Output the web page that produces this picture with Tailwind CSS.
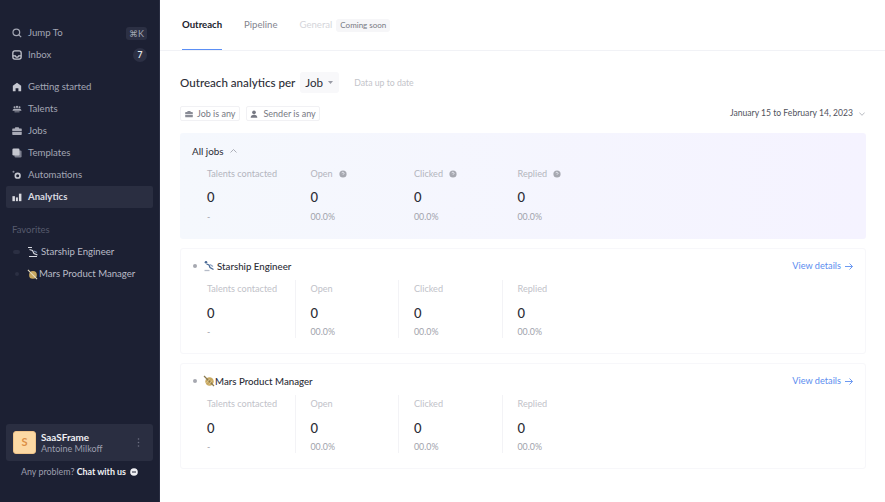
<!DOCTYPE html>
<html lang="en">
<head>
    <meta charset="UTF-8">
    <meta name="viewport" content="width=device-width, initial-scale=1.0">
    <title>Outreach analytics</title>
    <script src="https://cdn.jsdelivr.net/npm/@tailwindcss/browser@4"></script>
</head>
<body class="bg-white h-[502px] w-[885px] overflow-hidden flex font-['Lato','Liberation_Sans',sans-serif]">
    <!-- Sidebar -->
    <aside class="w-[160px] h-full shrink-0 bg-[#1c2033] flex flex-col text-[9.6px] text-[#a3a6b3] border-r border-[#2a2e42]">
        <div class="pt-[22px] px-[6px]">
            <div class="h-[22px] px-[6px] flex items-center gap-[6px]">
                <svg class="w-[10px] h-[10px]" viewBox="0 0 12 12" fill="none" stroke="#a3a6b3" stroke-width="1.5"><circle cx="5.2" cy="5.2" r="4"/><path d="M8.2 8.2L11 11"/></svg>
                <span class="flex-1">Jump To</span>
                <span class="bg-[#2c3044] rounded-[3px] w-[21px] text-center h-[13px] leading-[13px] text-[9px]">⌘K</span>
            </div>
            <div class="h-[22px] px-[6px] flex items-center gap-[6px]">
                <svg class="w-[10px] h-[10px]" viewBox="0 0 12 12" fill="none" stroke="#c5c7d0" stroke-width="1.5"><rect x="1" y="1" width="10" height="10" rx="2.5"/><path d="M1 7h3l1 1.5h2L8 7h3" /></svg>
                <span class="flex-1">Inbox</span>
                <span class="bg-[#2c3044] rounded-full w-[14px] h-[14px] leading-[14px] text-center text-[8.5px] font-bold text-[#e4e5ea]">7</span>
            </div>
        </div>
        <nav class="mt-[10px] px-[6px] flex flex-col">
            <div class="h-[22px] px-[6px] flex items-center gap-[6px]">
                <svg class="w-[10px] h-[10px]" viewBox="0 0 12 12" fill="#c5c7d0"><path d="M6 .8L1 4.6V11h3.3V7.6h3.4V11H11V4.6z"/></svg>
                <span>Getting started</span>
            </div>
            <div class="h-[22px] px-[6px] flex items-center gap-[6px]">
                <svg class="w-[10px] h-[10px]" viewBox="0 0 12 12" fill="#a9abb7"><circle cx="3" cy="4" r="1.2"/><circle cx="6" cy="3.400" r="1.400"/><circle cx="9" cy="4" r="1.200"/><path d="M.6 8c.4-1.600 1.400-2.200 2.400-2.200h6c1 0 2 .6 2.400 2.200zM3 9h6v.8H3z"/></svg>
                <span>Talents</span>
            </div>
            <div class="h-[22px] px-[6px] flex items-center gap-[6px]">
                <svg class="w-[10px] h-[10px]" viewBox="0 0 12 12" fill="#a9abb7"><path d="M4 1.500h4l.7 1.500H11a.7.7 0 0 1 .7.7V6H.3V3.700A.7.7 0 0 1 1 3h2.300zM.3 7h11.400v3a.8.8 0 0 1-.8.8H1.100a.8.8 0 0 1-.8-.8z"/></svg>
                <span>Jobs</span>
            </div>
            <div class="h-[22px] px-[6px] flex items-center gap-[6px]">
                <svg class="w-[10px] h-[10px]" viewBox="0 0 12 12"><rect x="3" y="3" width="8.500" height="8.500" rx="1.500" fill="#7d8090"/><rect x=".5" y=".5" width="8.500" height="8.500" rx="1.500" fill="#c5c7d0"/></svg>
                <span>Templates</span>
            </div>
            <div class="h-[22px] px-[6px] flex items-center gap-[6px]">
                <svg class="w-[10px] h-[10px]" viewBox="0 0 12 12" fill="none"><circle cx="6.800" cy="6.800" r="2.800" stroke="#c5c7d0" stroke-width="2"/><circle cx="1.800" cy="2" r="1.200" fill="#8a8d9c"/></svg>
                <span>Automations</span>
            </div>
            <div class="h-[22px] px-[6px] flex items-center gap-[6px] bg-[#2a2e41] rounded-[2px] text-[#d9dae0] font-bold">
                <svg class="w-[10px] h-[10px]" viewBox="0 0 12 12" fill="#d9dae0"><rect x=".5" y="5" width="3" height="6"/><rect x="4.700" y="6.500" width="2.400" height="4.500"/><rect x="8.300" y="2" width="3" height="9"/></svg>
                <span>Analytics</span>
            </div>
        </nav>
        <div class="mt-[15px] px-[12px] text-[9.5px] text-[#565a6c] h-[14px] leading-[14px]">Favorites</div>
        <div class="mt-[4px] px-[6px] text-[#b9bbc6]">
            <div class="h-[22px] pl-[7px] flex items-center">
                <span class="w-[7px] h-[4px] rounded-full bg-[#2b2f43]"></span>
                <svg class="w-[12px] h-[12px] ml-[7px] mr-[2px]" viewBox="0 0 12 12" fill="none" stroke="#d6d8e0" stroke-width="1.200"><path d="M1 1.500h4M2.500 3.500l3 1 1.500 3 3.500 1.500M2 10.500h8"/><path d="M7 5l3 1.500" stroke="#7c8fb0"/></svg>
                <span>Starship Engineer</span>
            </div>
            <div class="h-[22px] pl-[9px] flex items-center">
                <span class="w-[4px] h-[4px] rounded-full bg-[#2b2f43]"></span>
                <svg class="w-[11px] h-[11px] ml-[8px] mr-[1px]" viewBox="0 0 12 12"><circle cx="6.500" cy="6.500" r="4.200" fill="#c8a860"/><path d="M1 1l10 10" stroke="#e6dcc0" stroke-width="1.200"/></svg>
                <span>Mars Product Manager</span>
            </div>
        </div>
        <div class="mt-auto mx-[6px] h-[37px] pl-[7px] pr-[13px] bg-[#2a2e41] rounded-[3px] flex items-center">
            <div class="w-[23px] h-[23px] rounded-[3px] bg-[#fcd9a4] border border-[#f0c48a] text-[#dc8f45] text-[11px] font-bold flex items-center justify-center">S</div>
            <div class="ml-[5px] flex-1 leading-[12px]">
                <div class="text-[9.9px] font-bold text-[#f0f0f4]">SaaSFrame</div>
                <div class="text-[9px] text-[#9c9fae]">Antoine Milkoff</div>
            </div>
            <svg class="w-[3px] h-[9px]" viewBox="0 0 3 9" fill="#6d7083"><circle cx="1.500" cy="1" r=".8"/><circle cx="1.500" cy="4.500" r=".8"/><circle cx="1.500" cy="8" r=".8"/></svg>
        </div>
        <div class="h-[22px] mb-[19px] flex items-center justify-center gap-[4px] text-[8.9px]">
            <span class="text-[#9c9fae]">Any problem? <b class="text-[#f0f0f4]">Chat with us</b></span>
            <svg class="w-[8px] h-[8px]" viewBox="0 0 8 8"><circle cx="4" cy="4" r="3.800" fill="#f0f0f4"/><rect x="2" y="3.500" width="4" height="1" fill="#1c2033"/></svg>
        </div>
    </aside>

    <!-- Main -->
    <main class="flex-1 min-w-0">
        <div class="h-[51px] border-b border-[#f1f2f6] pl-[22px] flex text-[9.6px]">
            <div class="w-[40px] h-[50px] flex flex-col text-[#20222c] font-bold whitespace-nowrap">
                <span class="h-[49px] leading-[50px]">Outreach</span>
                <span class="h-px bg-[#5b8ff5]"></span>
            </div>
            <div class="ml-[22px] leading-[50px] text-[#83858f]">Pipeline</div>
            <div class="ml-[22px] leading-[50px] text-[#d4d5da]">General</div>
            <div class="ml-[4px] mt-[19px] h-[13px] px-[4px] rounded-[3px] bg-[#f6f6f8] text-[8px] leading-[13px] text-[#777983]">Coming soon</div>
        </div>
        <div class="pl-[20px] pr-[19px]">
            <div class="mt-[21px] h-[21px] flex items-center">
                <span class="text-[11.6px] text-[#2b2d36] font-medium">Outreach analytics per</span>
                <span class="ml-[5px] w-[39px] h-[21px] bg-[#f8f8fa] rounded-[3px] pl-[5px] flex items-center gap-[5px] text-[11.6px] text-[#2b2d36]">Job
                    <svg class="w-[5px] h-[3px]" viewBox="0 0 5 3" fill="#9a9ca6"><path d="M0 0h5L2.500 3z"/></svg>
                </span>
                <span class="ml-[15px] text-[8.7px] text-[#c3c4ca]">Data up to date</span>
            </div>
            <div class="mt-[13px] h-[15px] flex items-center text-[9px] text-[#777983]">
                <span class="h-[15px] px-[4px] border border-[#f1f1f4] rounded-[2px] flex items-center gap-[4px]">
                    <svg class="w-[8px] h-[8px]" viewBox="0 0 12 12" fill="#8a8c96"><path d="M4 1.500h4l.7 1.500H11a.7.7 0 0 1 .7.7V6H.3V3.700A.7.7 0 0 1 1 3h2.300zM.3 7h11.400v3a.8.8 0 0 1-.8.8H1.100a.8.8 0 0 1-.8-.8z"/></svg>
                    Job is any
                </span>
                <span class="ml-[6px] h-[15px] px-[3px] border border-[#f1f1f4] rounded-[2px] flex items-center gap-[5px]">
                    <svg class="w-[8px] h-[8px]" viewBox="0 0 12 12" fill="#777983"><circle cx="6" cy="3.500" r="2.800"/><path d="M1 11.500c0-3 2-4.500 5-4.500s5 1.500 5 4.500z"/></svg>
                    Sender is any
                </span>
                <span class="ml-auto text-[8.6px] text-[#50525c]">January 15 to February 14, 2023</span>
                <svg class="ml-[6px] mr-[1px] w-[6px] h-[4px]" viewBox="0 0 6 4" fill="none" stroke="#a7a9b1" stroke-width=".8"><path d="M.3.5L3 3.300 5.700.5"/></svg>
            </div>

            <!-- All jobs -->
            <section class="mt-[12px] h-[106px] rounded-[3px] bg-gradient-to-r from-[#f5f8fd] to-[#f5f3ff] pl-[12px] pt-[11px]">
                <div class="h-[14px] flex items-center gap-[6px] text-[9.9px] text-[#2b2d36]">All jobs
                    <svg class="w-[7px] h-[4px]" viewBox="0 0 7 4" fill="none" stroke="#9a9ca6" stroke-width=".8"><path d="M.5 3.500L3.500.5l3 3"/></svg>
                </div>
                <div class="mt-[9px] pl-[15px] grid grid-cols-[103.500px_103.500px_103.500px_103.500px]">
                    <div>
                        <div class="text-[9.1px] h-[14px] leading-[14px] text-[#b3b5bd]">Talents contacted</div>
                        <div class="mt-[7px] text-[13px] h-[18px] leading-[18px] text-[#2b2d36] font-medium">0</div>
                        <div class="mt-[4px] text-[8.8px] h-[14px] leading-[14px] text-[#a0a2ab]">-</div>
                    </div>
                    <div>
                        <div class="text-[9.1px] h-[14px] flex items-center gap-[6px] text-[#b3b5bd]">Open
                            <svg class="w-[8px] h-[8px]" viewBox="0 0 8 8"><circle cx="4" cy="4" r="3.600" fill="#a6a8b0"/><path d="M3 3.200a1 1 0 1 1 1.500.9L4 4.500V5" fill="none" stroke="#f5f6fd" stroke-width=".7"/></svg>
                        </div>
                        <div class="mt-[7px] text-[13px] h-[18px] leading-[18px] text-[#2b2d36] font-medium">0</div>
                        <div class="mt-[4px] text-[8.8px] h-[14px] leading-[14px] text-[#a0a2ab]">00.0%</div>
                    </div>
                    <div>
                        <div class="text-[9.1px] h-[14px] flex items-center gap-[6px] text-[#b3b5bd]">Clicked
                            <svg class="w-[8px] h-[8px]" viewBox="0 0 8 8"><circle cx="4" cy="4" r="3.600" fill="#a6a8b0"/><path d="M3 3.200a1 1 0 1 1 1.500.9L4 4.500V5" fill="none" stroke="#f5f6fd" stroke-width=".7"/></svg>
                        </div>
                        <div class="mt-[7px] text-[13px] h-[18px] leading-[18px] text-[#2b2d36] font-medium">0</div>
                        <div class="mt-[4px] text-[8.8px] h-[14px] leading-[14px] text-[#a0a2ab]">00.0%</div>
                    </div>
                    <div>
                        <div class="text-[9.1px] h-[14px] flex items-center gap-[6px] text-[#b3b5bd]">Replied
                            <svg class="w-[8px] h-[8px]" viewBox="0 0 8 8"><circle cx="4" cy="4" r="3.600" fill="#a6a8b0"/><path d="M3 3.200a1 1 0 1 1 1.500.9L4 4.500V5" fill="none" stroke="#f5f6fd" stroke-width=".7"/></svg>
                        </div>
                        <div class="mt-[7px] text-[13px] h-[18px] leading-[18px] text-[#2b2d36] font-medium">0</div>
                        <div class="mt-[4px] text-[8.8px] h-[14px] leading-[14px] text-[#a0a2ab]">00.0%</div>
                    </div>
                </div>
            </section>

            <!-- Starship Engineer -->
            <section class="mt-[9px] h-[106px] rounded-[3px] border border-[#f7f7fa] pl-[12px] pr-[12px] pt-[10px]">
                <div class="h-[14px] flex items-center text-[9.7px] font-medium text-[#2b2d36]">
                    <span class="w-[4px] h-[4px] rounded-full bg-[#a6a8b0] mr-[6px]"></span>
                    <svg class="w-[12px] h-[12px] mr-[2px]" viewBox="0 0 12 12" fill="none" stroke-width="1.300"><circle cx="3" cy="2.200" r="1.300" fill="#4a6a96"/><path d="M3.500 4l2.500 1 1 2.500 3.500 2" stroke="#4a6a96"/><path d="M7 4.500l3 2" stroke="#8fa4c4"/><path d="M1.500 10.500h5" stroke="#b6bcc8"/></svg>
                    Starship Engineer
                    <span class="ml-auto text-[9.2px] font-normal text-[#5b8def]">View details</span>
                    <svg class="ml-[4px] w-[8px] h-[7px]" viewBox="0 0 8 7" fill="none" stroke="#5b8def" stroke-width=".9"><path d="M0 3.500h7.300M4.500.5l3 3-3 3"/></svg>
                </div>
                <div class="mt-[9px] pl-[14px] grid grid-cols-[103.500px_103.500px_103.500px_103.500px]">
                    <div>
                        <div class="text-[9.1px] h-[14px] leading-[14px] text-[#c1c2c9]">Talents contacted</div>
                        <div class="mt-[8px] text-[13px] h-[18px] leading-[18px] text-[#2b2d36] font-medium">0</div>
                        <div class="mt-[3px] text-[8.8px] h-[14px] leading-[14px] text-[#a0a2ab]">-</div>
                    </div>
                    <div class="relative">
                        <span class="absolute -left-[16px] top-[-2px] w-px h-[58px] bg-[#f3f3f6]"></span>
                        <div class="text-[9.1px] h-[14px] leading-[14px] text-[#c1c2c9]">Open</div>
                        <div class="mt-[8px] text-[13px] h-[18px] leading-[18px] text-[#2b2d36] font-medium">0</div>
                        <div class="mt-[3px] text-[8.8px] h-[14px] leading-[14px] text-[#a0a2ab]">00.0%</div>
                    </div>
                    <div class="relative">
                        <span class="absolute -left-[16px] top-[-2px] w-px h-[58px] bg-[#f3f3f6]"></span>
                        <div class="text-[9.1px] h-[14px] leading-[14px] text-[#c1c2c9]">Clicked</div>
                        <div class="mt-[8px] text-[13px] h-[18px] leading-[18px] text-[#2b2d36] font-medium">0</div>
                        <div class="mt-[3px] text-[8.8px] h-[14px] leading-[14px] text-[#a0a2ab]">00.0%</div>
                    </div>
                    <div class="relative">
                        <span class="absolute -left-[16px] top-[-2px] w-px h-[58px] bg-[#f3f3f6]"></span>
                        <div class="text-[9.1px] h-[14px] leading-[14px] text-[#c1c2c9]">Replied</div>
                        <div class="mt-[8px] text-[13px] h-[18px] leading-[18px] text-[#2b2d36] font-medium">0</div>
                        <div class="mt-[3px] text-[8.8px] h-[14px] leading-[14px] text-[#a0a2ab]">00.0%</div>
                    </div>
                </div>
            </section>

            <!-- Mars Product Manager -->
            <section class="mt-[9px] h-[106px] rounded-[3px] border border-[#f7f7fa] pl-[12px] pr-[12px] pt-[10px]">
                <div class="h-[14px] flex items-center text-[9.7px] font-medium text-[#2b2d36]">
                    <span class="w-[4px] h-[4px] rounded-full bg-[#a6a8b0] mr-[6px]"></span>
                    <svg class="w-[12px] h-[12px]" viewBox="0 0 12 12"><circle cx="6.500" cy="6.500" r="4.200" fill="#c8a860"/><path d="M1 1l10 10" stroke="#8a7a50" stroke-width="1.200"/><path d="M3.500 8l3-4M6 9.500l3-4" stroke="#e4d5a8" stroke-width=".7"/></svg>
                    Mars Product Manager
                    <span class="ml-auto text-[9.2px] font-normal text-[#5b8def]">View details</span>
                    <svg class="ml-[4px] w-[8px] h-[7px]" viewBox="0 0 8 7" fill="none" stroke="#5b8def" stroke-width=".9"><path d="M0 3.500h7.300M4.500.5l3 3-3 3"/></svg>
                </div>
                <div class="mt-[9px] pl-[14px] grid grid-cols-[103.500px_103.500px_103.500px_103.500px]">
                    <div>
                        <div class="text-[9.1px] h-[14px] leading-[14px] text-[#c1c2c9]">Talents contacted</div>
                        <div class="mt-[8px] text-[13px] h-[18px] leading-[18px] text-[#2b2d36] font-medium">0</div>
                        <div class="mt-[3px] text-[8.8px] h-[14px] leading-[14px] text-[#a0a2ab]">-</div>
                    </div>
                    <div class="relative">
                        <span class="absolute -left-[16px] top-[-2px] w-px h-[58px] bg-[#f3f3f6]"></span>
                        <div class="text-[9.1px] h-[14px] leading-[14px] text-[#c1c2c9]">Open</div>
                        <div class="mt-[8px] text-[13px] h-[18px] leading-[18px] text-[#2b2d36] font-medium">0</div>
                        <div class="mt-[3px] text-[8.8px] h-[14px] leading-[14px] text-[#a0a2ab]">00.0%</div>
                    </div>
                    <div class="relative">
                        <span class="absolute -left-[16px] top-[-2px] w-px h-[58px] bg-[#f3f3f6]"></span>
                        <div class="text-[9.1px] h-[14px] leading-[14px] text-[#c1c2c9]">Clicked</div>
                        <div class="mt-[8px] text-[13px] h-[18px] leading-[18px] text-[#2b2d36] font-medium">0</div>
                        <div class="mt-[3px] text-[8.8px] h-[14px] leading-[14px] text-[#a0a2ab]">00.0%</div>
                    </div>
                    <div class="relative">
                        <span class="absolute -left-[16px] top-[-2px] w-px h-[58px] bg-[#f3f3f6]"></span>
                        <div class="text-[9.1px] h-[14px] leading-[14px] text-[#c1c2c9]">Replied</div>
                        <div class="mt-[8px] text-[13px] h-[18px] leading-[18px] text-[#2b2d36] font-medium">0</div>
                        <div class="mt-[3px] text-[8.8px] h-[14px] leading-[14px] text-[#a0a2ab]">00.0%</div>
                    </div>
                </div>
            </section>
        </div>
    </main>
</body>
</html>
